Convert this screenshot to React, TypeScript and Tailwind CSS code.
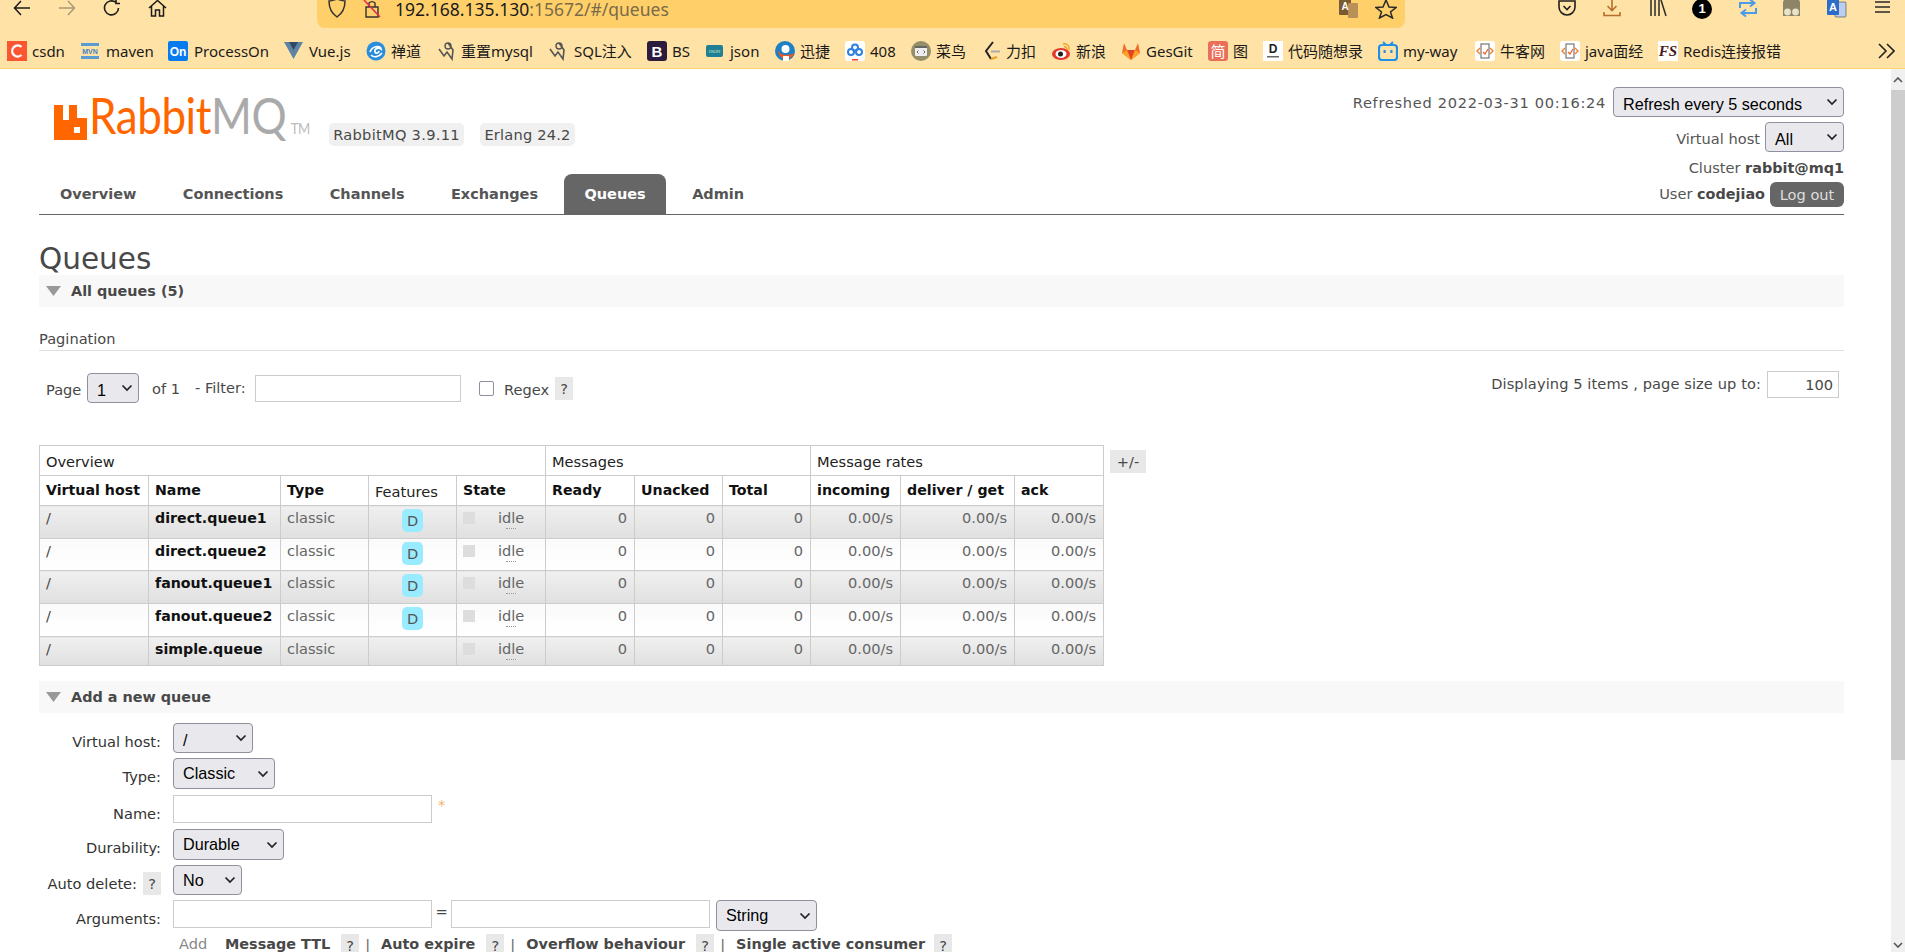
import React from "react";

const cjk = "font-['Noto_Sans','Noto_Sans_CJK_SC',sans-serif]";

function Bi({ children }: { children: React.ReactNode }) {
  return (
    <svg width="20" height="20" viewBox="0 0 20 20" className="shrink-0">
      {children}
    </svg>
  );
}

const dolphin = (
  <>
    <path d="M1 8 L6 15 L9 11 L14 18 L15 9 L10 2" fill="none" stroke="#555" strokeWidth="1.6" />
    <circle cx="10" cy="5" r="3" fill="none" stroke="#555" strokeWidth="1.4" />
  </>
);

const nowcoder = (
  <>
    <rect width="20" height="20" rx="3" fill="#fff" />
    <rect x="6" y="3" width="8" height="14" fill="none" stroke="#777" strokeWidth="1.2" />
    <path d="M5 7 L2 10 L5 13 M15 7 L18 10 L15 13" fill="none" stroke="#f08030" strokeWidth="1.4" />
    <path d="M8 11 L10 13 L13 8" fill="none" stroke="#e8632c" strokeWidth="1.3" />
  </>
);

const marks: Record<string, React.ReactNode> = {
  csdn: (
    <>
      <rect width="20" height="20" fill="#fc5531" />
      <path d="M14.5 6 A5.5 5.5 0 1 0 14.5 14" fill="none" stroke="#fff" strokeWidth="2.4" />
    </>
  ),
  maven: (
    <>
      <rect y="2" width="18" height="3" fill="#5b9bd5" />
      <rect y="15" width="18" height="3" fill="#5b9bd5" />
      <text x="9" y="13" textAnchor="middle" fontSize="7" fontWeight="700" fill="#3f7fbf" fontFamily="Liberation Sans">MVN</text>
    </>
  ),
  on: (
    <>
      <rect width="20" height="20" rx="2" fill="#067bef" />
      <text x="10" y="14.5" textAnchor="middle" fontSize="12" fontWeight="700" fill="#fff" fontFamily="Liberation Sans">On</text>
    </>
  ),
  vue: (
    <>
      <path d="M0 1 H19 L9.5 18 Z" fill="#5d83a5" />
      <path d="M5 1 H14 L9.5 9 Z" fill="#2f4a68" />
    </>
  ),
  zen: (
    <>
      <circle cx="10" cy="10" r="9.5" fill="#2a8cdc" />
      <path d="M4 11 C6 5 14 4 15 8 C12 6 8 8 9 11 C10 13 13 12 13 10 M5 14 C8 17 13 16 16 12" fill="none" stroke="#fff" strokeWidth="1.7" />
    </>
  ),
  mysql: dolphin,
  bs: (
    <>
      <rect width="20" height="20" rx="3" fill="#2b1b3d" />
      <text x="10" y="15.5" textAnchor="middle" fontSize="15" fontWeight="700" fill="#fff" fontFamily="Liberation Sans">B</text>
    </>
  ),
  json: (
    <>
      <rect x="0" y="4" width="17" height="12" rx="2" fill="#1f7f94" />
      <text x="8.5" y="12" textAnchor="middle" fontSize="5" fill="#d8e8c8" fontFamily="Liberation Serif">JSON</text>
    </>
  ),
  xun: (
    <>
      <circle cx="10" cy="10" r="10" fill="#1d7fc4" />
      <circle cx="10.5" cy="8" r="4" fill="#fff" />
      <path d="M2 8 C5 15 13 15 20 12 C16 18 12 18 10 20 C6 17 3 13 2 8" fill="#e8562a" />
      <rect x="8" y="15" width="6" height="5" fill="#fff" />
    </>
  ),
  n408: (
    <>
      <rect width="20" height="20" rx="3" fill="#fff" />
      <circle cx="6" cy="11" r="3" fill="none" stroke="#2f7fe0" strokeWidth="2" />
      <circle cx="14" cy="11" r="3" fill="none" stroke="#2f7fe0" strokeWidth="2" />
      <circle cx="10" cy="6.5" r="3" fill="none" stroke="#2f7fe0" strokeWidth="2" />
      <rect x="7" y="18" width="6" height="1.5" fill="#f04020" />
    </>
  ),
  runoob: (
    <>
      <circle cx="10" cy="10" r="10" fill="#948f69" />
      <rect x="4" y="5" width="12" height="10" rx="1" fill="#eee" />
      <rect x="4" y="5" width="12" height="2" fill="#666" />
      <path d="M7.5 9.5 L6 11 L7.5 12.5 M12.5 9.5 L14 11 L12.5 12.5" fill="none" stroke="#555" strokeWidth="0.9" />
    </>
  ),
  leet: (
    <>
      <path d="M10 1 L3 10 L8 18" fill="none" stroke="#222" strokeWidth="2" />
      <path d="M8 18 L14 16" fill="none" stroke="#f0a020" strokeWidth="2" />
      <path d="M8 10.5 H17" fill="none" stroke="#aaa" strokeWidth="2" />
    </>
  ),
  weibo: (
    <>
      <ellipse cx="9" cy="13" rx="9" ry="6" fill="#e6352b" />
      <ellipse cx="9" cy="13" rx="5.5" ry="4" fill="#fff" />
      <circle cx="8.5" cy="13" r="2.5" fill="#222" />
      <path d="M11 3 C15 2 18 5 17 9 M12 6 C14 5 15 7 15 9" fill="none" stroke="#f2a020" strokeWidth="1.4" />
    </>
  ),
  gitlab: (
    <>
      <path d="M10 19 L1 12 L3 2 L6 9 H14 L17 2 L19 12 Z" fill="#f06d26" />
      <path d="M10 19 L6 9 H14 Z" fill="#e24329" />
      <path d="M1 12 L6 9 L10 19 Z M19 12 L14 9 L10 19 Z" fill="#fca326" />
    </>
  ),
  jian: (
    <>
      <rect width="20" height="20" rx="3" fill="#ea6f5a" />
      <text x="10" y="15.5" textAnchor="middle" fontSize="15" fill="#fff" fontFamily="Noto Sans CJK SC">简</text>
    </>
  ),
  dm: (
    <>
      <rect width="20" height="20" fill="#fff" />
      <text x="10" y="12" textAnchor="middle" fontSize="12" fontWeight="700" fill="#222" fontFamily="Liberation Sans">D</text>
      <rect x="4" y="15" width="12" height="1.5" fill="#666" />
    </>
  ),
  bili: (
    <>
      <path d="M5 1 L8 4 M15 1 L12 4" stroke="#1e90e8" strokeWidth="2" />
      <rect x="1" y="4" width="18" height="15" rx="3" fill="none" stroke="#1e90e8" strokeWidth="2.2" />
      <rect x="5.5" y="9" width="2.2" height="3" fill="#1e90e8" />
      <rect x="12.3" y="9" width="2.2" height="3" fill="#1e90e8" />
    </>
  ),
  nk: nowcoder,
  fs: (
    <>
      <rect width="20" height="20" fill="#fff" />
      <text x="10" y="15" textAnchor="middle" fontSize="15" fontWeight="700" fontStyle="italic" fill="#4a1a1a" fontFamily="Liberation Serif">FS</text>
    </>
  ),
};

const bookmarks: { id: string; t: string; w: string; g: string }[] = [
  { id: "csdn", t: "csdn", w: "w-[74px]", g: "gap-[5px]" },
  { id: "maven", t: "maven", w: "w-[87px]", g: "gap-[5px]" },
  { id: "on", t: "ProcessOn", w: "w-[116px]", g: "gap-[6px]" },
  { id: "vue", t: "Vue.js", w: "w-[82px]", g: "gap-[5px]" },
  { id: "zen", t: "禅道", w: "w-[72px]", g: "gap-[5px]" },
  { id: "mysql", t: "重置mysql", w: "w-[111px]", g: "gap-[3px]" },
  { id: "mysql", t: "SQL注入", w: "w-[98px]", g: "gap-[5px]" },
  { id: "bs", t: "BS", w: "w-[59px]", g: "gap-[5px]" },
  { id: "json", t: "json", w: "w-[69px]", g: "gap-[4px]" },
  { id: "xun", t: "迅捷", w: "w-[70px]", g: "gap-[5px]" },
  { id: "n408", t: "408", w: "w-[66px]", g: "gap-[5px]" },
  { id: "runoob", t: "菜鸟", w: "w-[72px]", g: "gap-[5px]" },
  { id: "leet", t: "力扣", w: "w-[69px]", g: "gap-[3px]" },
  { id: "weibo", t: "新浪", w: "w-[69px]", g: "gap-[4px]" },
  { id: "gitlab", t: "GesGit", w: "w-[87px]", g: "gap-[5px]" },
  { id: "jian", t: "图", w: "w-[55px]", g: "gap-[5px]" },
  { id: "dm", t: "代码随想录", w: "w-[115px]", g: "gap-[5px]" },
  { id: "bili", t: "my-way", w: "w-[97px]", g: "gap-[5px]" },
  { id: "nk", t: "牛客网", w: "w-[85px]", g: "gap-[5px]" },
  { id: "nk", t: "java面经", w: "w-[98px]", g: "gap-[5px]" },
  { id: "fs", t: "Redis连接报错", w: "w-[220px]", g: "gap-[5px]" },
];

function Ti({ w, cls = "", children }: { w: number; cls?: string; children: React.ReactNode }) {
  return (
    <svg width={w} height="20" viewBox={`0 0 ${w} 20`} className={`shrink-0 ${cls}`}>
      {children}
    </svg>
  );
}

function Chrome() {
  return (
    <div className={`h-[69px] shrink-0 bg-[#ffe2a6] border-b border-[#ffd36e] ${cjk}`}>
      <div className="flex h-[34px] items-start">
        <div className="flex h-[18px] w-[317px] items-center pl-[13px] gap-[27px]">
          <Ti w={18}>
            <path d="M17 9 H2 M8 2 L1.5 9 L8 16" fill="none" stroke="#1b1b1b" strokeWidth="1.5" />
          </Ti>
          <Ti w={18}>
            <path d="M1 9 H16 M10 2 L16.5 9 L10 16" fill="none" stroke="#a8997a" strokeWidth="1.5" />
          </Ti>
          <Ti w={18}>
            <path d="M15.5 9 A7 7 0 1 1 13 3.5 M13 0.5 V4.5 H17" fill="none" stroke="#1b1b1b" strokeWidth="1.6" />
          </Ti>
          <Ti w={19}>
            <path d="M1 9 L9.5 1.5 L18 9 M3.5 7 V17 H7.5 V11 H11.5 V17 H15.5 V7" fill="none" stroke="#1b1b1b" strokeWidth="1.5" />
          </Ti>
        </div>
        <div className="flex h-[28px] w-[1088px] items-start rounded-b-lg bg-[#ffd06a] pl-[11px] pr-[8px]">
          <div className="flex h-[18px] items-center">
            <Ti w={18}>
              <path d="M9 0 C12 1 14 2 17 2 C17 9 15 14 9 18 C3 14 1 9 1 2 C4 2 6 1 9 0 Z" fill="none" stroke="#333" strokeWidth="1.5" />
            </Ti>
            <div className="ml-[17px]">
              <Ti w={18}>
                <path d="M6 8 V4 A4 4 0 0 1 12 4 V8 M3 8 H15 V18 H3 Z" fill="none" stroke="#333" strokeWidth="1.4" />
                <path d="M1 1 L17 18" stroke="#e22850" strokeWidth="1.5" />
              </Ti>
            </div>
          </div>
          <div className="ml-[14px] h-[18px] text-[17.5px] leading-[18px] whitespace-nowrap text-[#1a1a1a]">
            192.168.135.130<span className="text-[#7a6a48]">:15672/#/queues</span>
          </div>
          <div className="ml-auto flex h-[18px] items-center gap-[16px]">
            <Ti w={20}>
              <rect x="0" y="0" width="12" height="16" rx="1" fill="#7a5a30" />
              <rect x="9" y="4" width="10" height="15" rx="1" fill="#b89058" />
              <text x="6" y="11" textAnchor="middle" fontSize="10" fontWeight="700" fill="#fff" fontFamily="Liberation Sans">A</text>
            </Ti>
            <Ti w={22}>
              <path d="M11 1 L14 8 L21 8.5 L15.5 13 L17.5 19 L11 15.5 L4.5 19 L6.5 13 L1 8.5 L8 8 Z" fill="none" stroke="#2a2a2a" strokeWidth="1.5" />
            </Ti>
          </div>
        </div>
        <div className="flex h-[18px] flex-1 items-center pl-[153px]">
          <Ti w={18}>
            <path d="M1 2 H17 V8 A8 8 0 0 1 1 8 Z" fill="none" stroke="#1f1f1f" strokeWidth="1.6" />
            <path d="M5.5 7 L9 10.5 L12.5 7" fill="none" stroke="#1f1f1f" strokeWidth="1.6" />
          </Ti>
          <Ti w={18} cls="ml-[27px]">
            <path d="M9 0 V11 M4.5 7 L9 11.5 L13.5 7 M1 13 V16.5 H17 V13" fill="none" stroke="#b5702a" strokeWidth="1.6" />
          </Ti>
          <Ti w={18} cls="ml-[28px]">
            <path d="M2 1 V17 M6 1 V17 M10 1 V17 M12 1 L17 17" fill="none" stroke="#2a2a2a" strokeWidth="1.5" />
          </Ti>
          <div className="ml-[25px] flex h-[20px] w-[20px] shrink-0 items-center justify-center rounded-full bg-black text-[13px] font-bold text-white font-['Liberation_Sans']">
            1
          </div>
          <Ti w={18} cls="ml-[27px]">
            <path d="M1 9 V4 H15 M11 0.5 L15.5 4 L11 7.5 M17 9 V14 H3 M7 10.5 L2.5 14 L7 17.5" fill="none" stroke="#4a9be8" strokeWidth="2" />
          </Ti>
          <Ti w={19} cls="ml-[25px]">
            <path d="M1 17 V4 Q1 0 5 0 H14 Q18 0 18 4 V17 Z" fill="#8c8568" />
            <circle cx="5.5" cy="13" r="3.4" fill="#e8e2c8" />
            <circle cx="13.5" cy="13" r="3.4" fill="#e8e2c8" />
          </Ti>
          <Ti w={20} cls="ml-[26px]">
            <rect x="8" y="3" width="11" height="15" rx="1" fill="#b8cff0" stroke="#444" strokeWidth="0.6" />
            <rect x="0" y="0" width="12" height="16" rx="1" fill="#2d6cc8" />
            <text x="6" y="12" textAnchor="middle" fontSize="11" fontWeight="700" fill="#fff" fontFamily="Liberation Sans">A</text>
          </Ti>
          <Ti w={16} cls="ml-[28px]">
            <path d="M0 3 H15 M0 8 H15 M0 13 H15" stroke="#2a2a2a" strokeWidth="1.5" />
          </Ti>
        </div>
      </div>
      <div className="flex h-[34px] items-center pl-[7px]">
        {bookmarks.map((b) => (
          <div key={b.t} className={`flex shrink-0 items-center ${b.w} ${b.g}`}>
            <Bi>{marks[b.id]}</Bi>
            <span className="text-[15px] leading-5 whitespace-nowrap text-[#1a1a1a]">{b.t}</span>
          </div>
        ))}
        <svg width="17" height="16" viewBox="0 0 17 16" className="shrink-0">
          <path d="M1 1 L8 8 L1 15 M9 1 L16 8 L9 15" fill="none" stroke="#222" strokeWidth="1.6" />
        </svg>
      </div>
    </div>
  );
}

function Sel({ label, cls, lower }: { label: string; cls: string; lower?: boolean }) {
  return (
    <div className={`flex shrink-0 items-center justify-between rounded-[4px] border border-[#8f8f9d] bg-[#e9e9ed] pl-[9px] pr-[5px] font-['Liberation_Sans'] text-[16.2px] text-black ${cls}`}>
      <span className={lower ? "mt-[4px] whitespace-nowrap" : "whitespace-nowrap"}>{label}</span>
      <svg width="12" height="8" viewBox="0 0 12 8" className="shrink-0">
        <path d="M1.5 1.5 L6 6 L10.5 1.5" fill="none" stroke="#222" strokeWidth="1.7" />
      </svg>
    </div>
  );
}

function Help({ cls }: { cls: string }) {
  return (
    <span className={`flex h-[23px] w-[18px] shrink-0 items-center justify-center bg-[#e8e8e8] text-[14.6px] text-[#484848] ${cls}`}>?</span>
  );
}

function Triangle() {
  return (
    <svg width="15" height="10" viewBox="0 0 15 10" className="shrink-0">
      <path d="M0 0 H15 L7.5 10 Z" fill="#999" />
    </svg>
  );
}

const tabs = ["Overview", "Connections", "Channels", "Exchanges", "Queues", "Admin"];

function Header() {
  return (
    <div className="flex h-[146px] justify-between border-b border-[#666]">
      <div className="flex flex-col justify-between">
        <div className="flex items-start pt-[36px] pl-[15px]">
          <svg width="33" height="35" viewBox="0 0 33 35" className="shrink-0">
            <path fillRule="evenodd" d="M0 0 H9 V15 H15 V0 H23 V13 H33 V35 H0 Z M20 22 V28 H26 V22 Z" fill="#ff6600" />
          </svg>
          <div className="h-[46px] w-[222px] shrink-0 flex items-end">
            <div className="origin-left scale-x-[0.88] whitespace-nowrap font-['Lato'] text-[50px] leading-[46px] font-normal ml-[2px] tracking-[-0.5px] -mt-[7px]">
              <span className="text-[#ff6600]">Rabbit</span>
              <span className="text-[#aaaaaa]">MQ</span>
              <span className="text-[#bbbbbb] text-[15px] ml-[5px]">TM</span>
            </div>
          </div>
          <div className="mt-[18px] flex h-[23px] w-[135px] items-center justify-center rounded-[5px] bg-[#f0f0f0] text-[#484848] ml-[20px] tracking-[0.3px]">RabbitMQ 3.9.11</div>
          <div className="mt-[18px] ml-[16px] flex h-[23px] w-[95px] items-center justify-center rounded-[5px] bg-[#f0f0f0] text-[#484848] tracking-[0.2px]">Erlang 24.2</div>
        </div>
        <div className="flex h-[40px] gap-[6.4px] pl-px">
          {tabs.map((t) => (
            <div
              key={t}
              className={t === "Queues" ? "flex items-center rounded-t-lg bg-[#666] px-5 pt-[2px] text-[14.5px] font-bold text-white" : "flex items-center px-5 pt-[2px] text-[14.5px] font-bold text-[#555]"}
            >
              {t}
            </div>
          ))}
        </div>
      </div>
      <div className="flex flex-col items-end pt-[18px]">
        <div className="flex items-center gap-[7px]">
          <span className="mt-[2px] tracking-[0.7px] text-[#555]">Refreshed 2022-03-31 00:16:24</span>
          <Sel label="Refresh every 5 seconds" cls="h-[30px] w-[231px]" lower />
        </div>
        <div className="mt-[5px] flex items-center gap-[5px]">
          <span className="mt-[3px] text-[#555]">Virtual host</span>
          <Sel label="All" cls="h-[30px] w-[79px]" lower />
        </div>
        <div className="mt-[6px] h-5 leading-5 text-[#555]">
          Cluster <b className="text-[14.4px] text-[#484848]">rabbit@mq1</b>
        </div>
        <div className="mt-[4px] flex items-center gap-[5px] text-[#555]">
          <span>
            User <b className="text-[14.4px] text-[#484848]">codejiao</b>
          </span>
          <div className="flex h-[25px] w-[74px] items-center justify-center rounded-md bg-[#666] text-[#ddd]">Log out</div>
        </div>
      </div>
    </div>
  );
}

function Section({ title, cls }: { title: string; cls: string }) {
  return (
    <div className={`flex h-[32px] items-center gap-[10px] bg-[#f8f8f8] pl-[7px] text-[14.4px] font-bold text-[#484848] ${cls}`}>
      <Triangle />
      <span className="mt-px">{title}</span>
    </div>
  );
}

function Pager() {
  return (
    <div className="mt-[20px] flex h-[74px] justify-between text-[#484848]">
      <div className="flex items-start">
        <span className="ml-[7px] mt-[9px] w-[41px] leading-5">Page</span>
        <Sel label="1" cls="mt-[2px] h-[30px] w-[52px]" lower />
        <span className="ml-[13px] mt-[8px] w-[43px] leading-5">of 1</span>
        <span className="mt-[7px] w-[60px] leading-5">- Filter:</span>
        <input readOnly className="mt-[4px] h-[27px] w-[206px] border border-[#ccc] bg-white" />
        <span className="ml-[18px] mt-[10px] h-[15px] w-[15px] rounded-[2px] border border-[#8f8f9d] bg-white" />
        <span className="ml-[10px] mt-[9px] w-[51px] leading-5">Regex</span>
        <Help cls="mt-[6px]" />
      </div>
      <div className="flex items-start pr-[5px]">
        <span className="mt-[3px] tracking-[0.1px] leading-5">Displaying 5 items , page size up to:</span>
        <input readOnly value="100" className="ml-[6px] h-[27px] w-[72px] border border-[#ccc] bg-white pr-[5px] text-right text-[#484848]" />
      </div>
    </div>
  );
}

const rows = [
  { n: "direct.queue1", d: true, h: "h-[33px]", alt: true },
  { n: "direct.queue2", d: true, h: "h-[32px]", alt: false },
  { n: "fanout.queue1", d: true, h: "h-[33px]", alt: true },
  { n: "fanout.queue2", d: true, h: "h-[33px]", alt: false },
  { n: "simple.queue", d: false, h: "h-[29px]", alt: true },
];

function QueueTable() {
  const b = "border border-[#ccc]";
  const th = `${b} pl-[6px] text-left align-middle text-[14.2px] font-bold text-[#111]`;
  const gh = `${b} pl-[6px] pt-[2px] text-left align-middle font-normal text-[#222]`;
  return (
    <div className="flex items-start gap-[6px]">
      <table className="w-[1064px] shrink-0 table-fixed border-collapse">
        <colgroup>
          <col className="w-[109px]" />
          <col className="w-[132px]" />
          <col className="w-[88px]" />
          <col className="w-[88px]" />
          <col className="w-[89px]" />
          <col className="w-[89px]" />
          <col className="w-[88px]" />
          <col className="w-[88px]" />
          <col className="w-[90px]" />
          <col className="w-[114px]" />
          <col className="w-[89px]" />
        </colgroup>
        <thead>
          <tr className="h-[30px]">
            <th colSpan={5} className={gh}>Overview</th>
            <th colSpan={3} className={gh}>Messages</th>
            <th colSpan={3} className={gh}>Message rates</th>
          </tr>
          <tr className="h-[30px]">
            <th className={th}>Virtual host</th>
            <th className={th}>Name</th>
            <th className={th}>Type</th>
            <th className={gh}>Features</th>
            <th className={th}>State</th>
            <th className={th}>Ready</th>
            <th className={th}>Unacked</th>
            <th className={th}>Total</th>
            <th className={th}>incoming</th>
            <th className={th}>deliver / get</th>
            <th className={th}>ack</th>
          </tr>
        </thead>
        <tbody>
          {rows.map((r) => {
            const bg = r.alt ? "bg-linear-to-b from-[#f0f0f0] to-[#e0e0e0]" : "bg-linear-to-b from-[#fafafa] to-[#ffffff]";
            const td = `${b} ${bg} align-top pt-[2px] pl-[6px] leading-5`;
            const num = `${b} ${bg} align-top pt-[2px] pr-[7px] text-right leading-5 text-[#666]`;
            return (
              <tr key={r.n} className={r.h}>
                <td className={`${td} text-[#484848]`}>/</td>
                <td className={`${td} text-[14.2px] font-bold text-[#111]`}>{r.n}</td>
                <td className={`${td} text-[#666]`}>classic</td>
                <td className={`${b} ${bg} align-top pt-[3px]`}>
                  {r.d && (
                    <div className="mx-auto flex h-[23px] w-[21px] items-center justify-center rounded-[5px] bg-[#99ebff] text-[#555]">D</div>
                  )}
                </td>
                <td className={`${td} text-[#666]`}>
                  <div className="flex items-start">
                    <span className="mt-[4px] h-[12px] w-[12px] shrink-0 bg-[#ddd]" />
                    <span className="ml-[23px] flex flex-col items-center leading-5">
                      idle
                      <span className="w-[10px] border-b border-dotted border-[#999]" />
                    </span>
                  </div>
                </td>
                <td className={num}>0</td>
                <td className={num}>0</td>
                <td className={num}>0</td>
                <td className={num}>0.00/s</td>
                <td className={num}>0.00/s</td>
                <td className={num}>0.00/s</td>
              </tr>
            );
          })}
        </tbody>
      </table>
      <div className="mt-[5px] flex h-[23px] w-[36px] shrink-0 items-center justify-center bg-[#e8e8e8] text-[#484848]">+/-</div>
    </div>
  );
}

function FormRow({ label, help, cls, children }: { label: string; help?: boolean; cls: string; children: React.ReactNode }) {
  return (
    <div className={`flex items-start ${cls}`}>
      <div className="flex w-[122px] shrink-0 items-start justify-end text-[#333]">
        <span className="pt-[9px] leading-5">{label}</span>
        {help && <Help cls="ml-[6px] mt-[7px]" />}
      </div>
      <div className="ml-[12px] flex items-start">{children}</div>
    </div>
  );
}

function Shortcut({ t }: { t: string }) {
  return <b className="-mt-px text-[14.4px] text-[#484848] whitespace-nowrap">{t}</b>;
}

function Sep() {
  return <span className="ml-[6px] mr-[11px] -mt-px text-[#666]">|</span>;
}

function Form() {
  const inp = "h-[28px] w-[259px] border border-[#ccc] bg-white shrink-0";
  return (
    <div className="mt-[10px]">
      <FormRow label="Virtual host:" cls="h-[35px]">
        <Sel label="/" cls="h-[30px] w-[80px]" lower />
      </FormRow>
      <FormRow label="Type:" cls="h-[37px]">
        <Sel label="Classic" cls="h-[31px] w-[102px]" />
      </FormRow>
      <FormRow label="Name:" cls="h-[34px]">
        <input readOnly className={inp} />
        <span className="ml-[6px] text-[#f5b26b] leading-5">*</span>
      </FormRow>
      <FormRow label="Durability:" cls="h-[36px]">
        <Sel label="Durable" cls="h-[31px] w-[111px]" />
      </FormRow>
      <FormRow label="Auto delete:" help cls="h-[35px]">
        <Sel label="No" cls="h-[30px] w-[69px]" />
      </FormRow>
      <FormRow label="Arguments:" cls="h-[34px]">
        <input readOnly className={inp} />
        <span className="w-[19px] text-center leading-6 text-[#484848]">=</span>
        <input readOnly className={inp} />
        <Sel label="String" cls="ml-[6px] h-[31px] w-[101px]" />
      </FormRow>
      <div className="ml-[140px] flex items-center text-[#484848]">
        <span className="w-[46px] text-[#888] -mt-[3px]">Add</span>
        <Shortcut t="Message TTL" />
        <Help cls="ml-[11px]" />
        <Sep />
        <Shortcut t="Auto expire" />
        <Help cls="ml-[11px]" />
        <Sep />
        <Shortcut t="Overflow behaviour" />
        <Help cls="ml-[11px]" />
        <Sep />
        <Shortcut t="Single active consumer" />
        <Help cls="ml-[9px]" />
      </div>
    </div>
  );
}

function Scrollbar() {
  return (
    <div className="flex w-[14px] shrink-0 flex-col bg-[#f0f0f0]">
      <div className="flex h-[21px] items-center justify-center">
        <svg width="10" height="6" viewBox="0 0 10 6">
          <path d="M1 5 L5 1 L9 5" fill="none" stroke="#555" strokeWidth="1.6" />
        </svg>
      </div>
      <div className="h-[670px] bg-[#cdcdcd]" />
      <div className="mt-auto flex h-[14px] items-center justify-center">
        <svg width="10" height="6" viewBox="0 0 10 6">
          <path d="M1 1 L5 5 L9 1" fill="none" stroke="#555" strokeWidth="1.6" />
        </svg>
      </div>
    </div>
  );
}

export default function App() {
  return (
    <div className="flex h-[952px] w-[1905px] flex-col overflow-hidden bg-white">
      <Chrome />
      <div className="flex min-h-0 flex-1">
        <div className="min-w-0 flex-1 overflow-hidden pl-[39px] pr-[47px] font-['DejaVu_Sans','Verdana',sans-serif] text-[14.6px] text-[#484848]">
          <Header />
          <div className="flex h-[60px] items-start pt-[26px] text-[29.5px] leading-[36px] text-[#484848]">Queues</div>
          <Section title="All queues (5)" cls="" />
          <div className="h-[44px] border-b border-[#e0e0e0] pt-[22px] leading-5">Pagination</div>
          <Pager />
          <QueueTable />
          <Section title="Add a new queue" cls="mt-[15px]" />
          <Form />
        </div>
        <Scrollbar />
      </div>
    </div>
  );
}
